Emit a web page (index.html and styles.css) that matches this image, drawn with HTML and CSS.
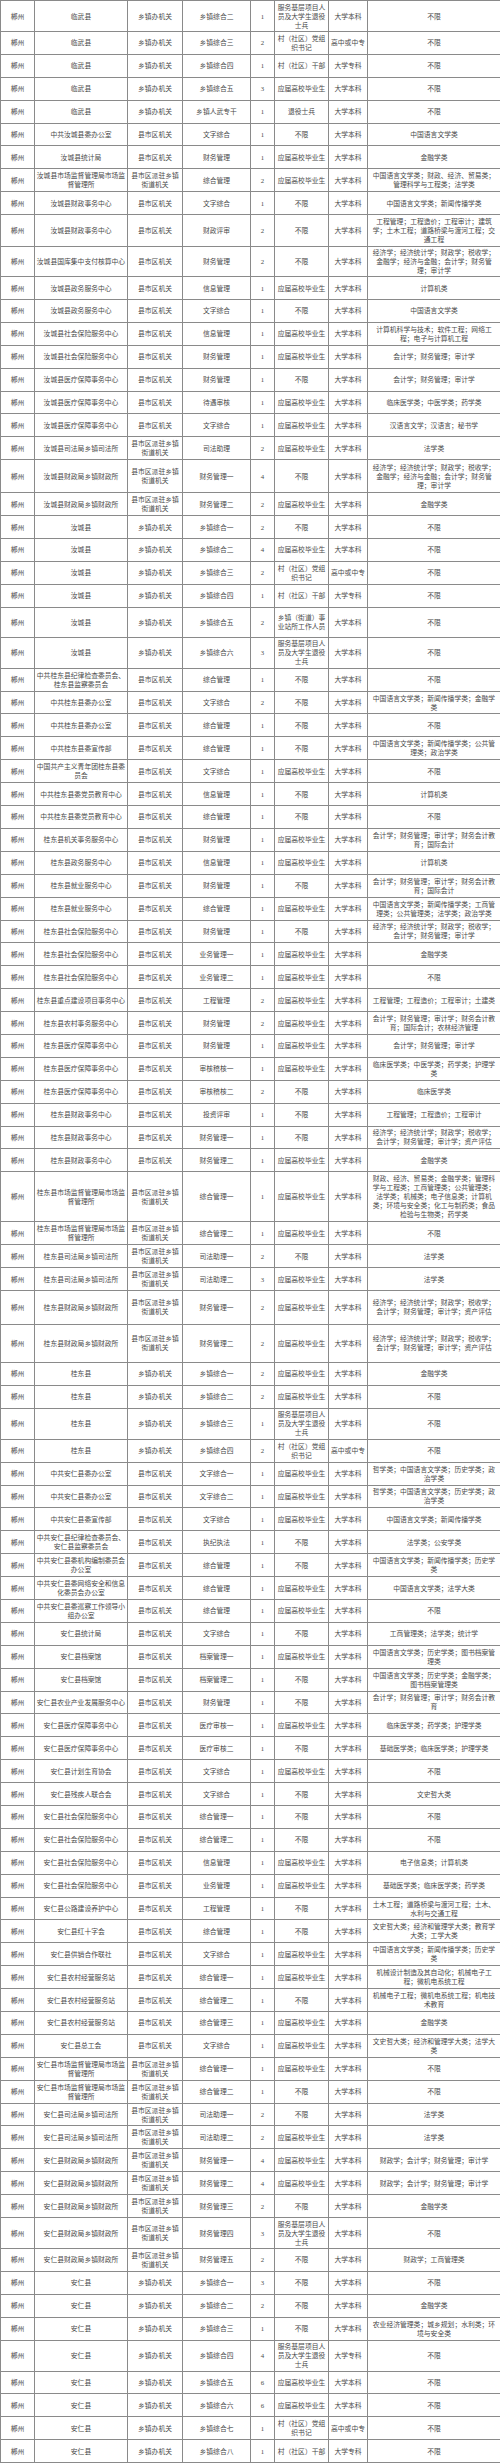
FILE: index.html
```html
<!DOCTYPE html>
<html lang="zh-CN">
<head>
<meta charset="utf-8">
<title>郴州 职位表</title>
<link rel="stylesheet" href="styles.css">
</head>
<body>
<table class="grid">
<colgroup>
<col class="c-city"><col class="c-unit"><col class="c-type"><col class="c-pos"><col class="c-num"><col class="c-obj"><col class="c-edu"><col class="c-major">
</colgroup>
<tbody>
<tr class="h31"><td>郴州</td><td>临武县</td><td>乡镇办机关</td><td>乡镇综合二</td><td>1</td><td>服务基层项目人<br>员及大学生退役<br>士兵</td><td>大学本科</td><td>不限</td></tr>
<tr><td>郴州</td><td>临武县</td><td>乡镇办机关</td><td>乡镇综合三</td><td>2</td><td>村（社区）党组<br>织书记</td><td>高中或中专</td><td>不限</td></tr>
<tr><td>郴州</td><td>临武县</td><td>乡镇办机关</td><td>乡镇综合四</td><td>1</td><td>村（社区）干部</td><td>大学专科</td><td>不限</td></tr>
<tr><td>郴州</td><td>临武县</td><td>乡镇办机关</td><td>乡镇综合五</td><td>3</td><td>应届高校毕业生</td><td>大学本科</td><td>不限</td></tr>
<tr><td>郴州</td><td>临武县</td><td>乡镇办机关</td><td>乡镇人武专干</td><td>1</td><td>退役士兵</td><td>大学本科</td><td>不限</td></tr>
<tr><td>郴州</td><td>中共汝城县委办公室</td><td>县市区机关</td><td>文字综合</td><td>1</td><td>不限</td><td>大学本科</td><td>中国语言文学类</td></tr>
<tr><td>郴州</td><td>汝城县统计局</td><td>县市区机关</td><td>财务管理</td><td>1</td><td>应届高校毕业生</td><td>大学本科</td><td>金融学类</td></tr>
<tr><td>郴州</td><td>汝城县市场监督管理局市场监<br>督管理所</td><td>县市区派驻乡镇<br>街道机关</td><td>综合管理</td><td>2</td><td>应届高校毕业生</td><td>大学本科</td><td>中国语言文学类；财政、经济、贸易类；<br>管理科学与工程类；法学类</td></tr>
<tr><td>郴州</td><td>汝城县财政事务中心</td><td>县市区机关</td><td>文字综合</td><td>1</td><td>不限</td><td>大学本科</td><td>中国语言文学类；新闻传播学类</td></tr>
<tr class="h32"><td>郴州</td><td>汝城县财政事务中心</td><td>县市区机关</td><td>财政评审</td><td>2</td><td>不限</td><td>大学本科</td><td>工程管理；工程造价；工程审计；建筑<br>学；土木工程；道路桥梁与渡河工程；交<br>通工程</td></tr>
<tr class="h30"><td>郴州</td><td>汝城县国库集中支付核算中心</td><td>县市区机关</td><td>财务管理</td><td>2</td><td>不限</td><td>大学本科</td><td>经济学；经济统计学；财政学；税收学；<br>金融学；经济与金融；会计学；财务管<br>理；审计学</td></tr>
<tr><td>郴州</td><td>汝城县政务服务中心</td><td>县市区机关</td><td>信息管理</td><td>1</td><td>应届高校毕业生</td><td>大学本科</td><td>计算机类</td></tr>
<tr><td>郴州</td><td>汝城县政务服务中心</td><td>县市区机关</td><td>文字综合</td><td>1</td><td>不限</td><td>大学本科</td><td>中国语言文学类</td></tr>
<tr><td>郴州</td><td>汝城县社会保险服务中心</td><td>县市区机关</td><td>信息管理</td><td>1</td><td>应届高校毕业生</td><td>大学本科</td><td>计算机科学与技术；软件工程；网络工<br>程；电子与计算机工程</td></tr>
<tr><td>郴州</td><td>汝城县社会保险服务中心</td><td>县市区机关</td><td>财务管理</td><td>1</td><td>应届高校毕业生</td><td>大学本科</td><td>会计学；财务管理；审计学</td></tr>
<tr><td>郴州</td><td>汝城县医疗保障事务中心</td><td>县市区机关</td><td>财务管理</td><td>1</td><td>不限</td><td>大学本科</td><td>会计学；财务管理；审计学</td></tr>
<tr><td>郴州</td><td>汝城县医疗保障事务中心</td><td>县市区机关</td><td>待遇审核</td><td>1</td><td>应届高校毕业生</td><td>大学本科</td><td>临床医学类；中医学类；药学类</td></tr>
<tr><td>郴州</td><td>汝城县医疗保障事务中心</td><td>县市区机关</td><td>文字综合</td><td>1</td><td>应届高校毕业生</td><td>大学本科</td><td>汉语言文学；汉语言；秘书学</td></tr>
<tr><td>郴州</td><td>汝城县司法局乡镇司法所</td><td>县市区派驻乡镇<br>街道机关</td><td>司法助理</td><td>2</td><td>应届高校毕业生</td><td>大学本科</td><td>法学类</td></tr>
<tr class="h33"><td>郴州</td><td>汝城县财政局乡镇财政所</td><td>县市区派驻乡镇<br>街道机关</td><td>财务管理一</td><td>4</td><td>不限</td><td>大学本科</td><td>经济学；经济统计学；财政学；税收学；<br>金融学；经济与金融；会计学；财务管<br>理；审计学</td></tr>
<tr><td>郴州</td><td>汝城县财政局乡镇财政所</td><td>县市区派驻乡镇<br>街道机关</td><td>财务管理二</td><td>2</td><td>应届高校毕业生</td><td>大学本科</td><td>金融学类</td></tr>
<tr><td>郴州</td><td>汝城县</td><td>乡镇办机关</td><td>乡镇综合一</td><td>2</td><td>不限</td><td>大学本科</td><td>不限</td></tr>
<tr><td>郴州</td><td>汝城县</td><td>乡镇办机关</td><td>乡镇综合二</td><td>4</td><td>应届高校毕业生</td><td>大学本科</td><td>不限</td></tr>
<tr><td>郴州</td><td>汝城县</td><td>乡镇办机关</td><td>乡镇综合三</td><td>2</td><td>村（社区）党组<br>织书记</td><td>高中或中专</td><td>不限</td></tr>
<tr><td>郴州</td><td>汝城县</td><td>乡镇办机关</td><td>乡镇综合四</td><td>1</td><td>村（社区）干部</td><td>大学专科</td><td>不限</td></tr>
<tr class="h30"><td>郴州</td><td>汝城县</td><td>乡镇办机关</td><td>乡镇综合五</td><td>2</td><td>乡镇（街道）事<br>业站所工作人员</td><td>大学本科</td><td>不限</td></tr>
<tr class="h31"><td>郴州</td><td>汝城县</td><td>乡镇办机关</td><td>乡镇综合六</td><td>3</td><td>服务基层项目人<br>员及大学生退役<br>士兵</td><td>大学本科</td><td>不限</td></tr>
<tr><td>郴州</td><td>中共桂东县纪律检查委员会、<br>桂东县监察委员会</td><td>县市区机关</td><td>综合管理</td><td>1</td><td>不限</td><td>大学本科</td><td>不限</td></tr>
<tr><td>郴州</td><td>中共桂东县委办公室</td><td>县市区机关</td><td>文字综合</td><td>2</td><td>不限</td><td>大学本科</td><td>中国语言文学类；新闻传播学类；金融学<br>类</td></tr>
<tr><td>郴州</td><td>中共桂东县委办公室</td><td>县市区机关</td><td>综合管理</td><td>1</td><td>不限</td><td>大学本科</td><td>不限</td></tr>
<tr><td>郴州</td><td>中共桂东县委宣传部</td><td>县市区机关</td><td>综合管理</td><td>1</td><td>不限</td><td>大学本科</td><td>中国语言文学类；新闻传播学类；公共管<br>理类；政治学类</td></tr>
<tr><td>郴州</td><td>中国共产主义青年团桂东县委<br>员会</td><td>县市区机关</td><td>文字综合</td><td>1</td><td>应届高校毕业生</td><td>大学本科</td><td>不限</td></tr>
<tr><td>郴州</td><td>中共桂东县委党员教育中心</td><td>县市区机关</td><td>信息管理</td><td>1</td><td>不限</td><td>大学本科</td><td>计算机类</td></tr>
<tr><td>郴州</td><td>中共桂东县委党员教育中心</td><td>县市区机关</td><td>综合管理</td><td>1</td><td>不限</td><td>大学本科</td><td>不限</td></tr>
<tr><td>郴州</td><td>桂东县机关事务服务中心</td><td>县市区机关</td><td>财务管理</td><td>1</td><td>应届高校毕业生</td><td>大学本科</td><td>会计学；财务管理；审计学；财务会计教<br>育；国际会计</td></tr>
<tr><td>郴州</td><td>桂东县政务服务中心</td><td>县市区机关</td><td>信息管理</td><td>1</td><td>应届高校毕业生</td><td>大学本科</td><td>计算机类</td></tr>
<tr><td>郴州</td><td>桂东县就业服务中心</td><td>县市区机关</td><td>财务管理</td><td>1</td><td>不限</td><td>大学本科</td><td>会计学；财务管理；审计学；财务会计教<br>育；国际会计</td></tr>
<tr><td>郴州</td><td>桂东县就业服务中心</td><td>县市区机关</td><td>综合管理</td><td>1</td><td>应届高校毕业生</td><td>大学本科</td><td>中国语言文学类；新闻传播学类；工商管<br>理类；公共管理类；法学类；政治学类</td></tr>
<tr><td>郴州</td><td>桂东县社会保险服务中心</td><td>县市区机关</td><td>财务管理</td><td>1</td><td>不限</td><td>大学本科</td><td>经济学；经济统计学；财政学；税收学；<br>会计学；财务管理；审计学</td></tr>
<tr><td>郴州</td><td>桂东县社会保险服务中心</td><td>县市区机关</td><td>业务管理一</td><td>1</td><td>应届高校毕业生</td><td>大学本科</td><td>金融学类</td></tr>
<tr><td>郴州</td><td>桂东县社会保险服务中心</td><td>县市区机关</td><td>业务管理二</td><td>1</td><td>应届高校毕业生</td><td>大学本科</td><td>不限</td></tr>
<tr><td>郴州</td><td>桂东县重点建设项目事务中心</td><td>县市区机关</td><td>工程管理</td><td>2</td><td>应届高校毕业生</td><td>大学本科</td><td>工程管理；工程造价；工程审计；土建类</td></tr>
<tr><td>郴州</td><td>桂东县农村事务服务中心</td><td>县市区机关</td><td>财务管理</td><td>2</td><td>应届高校毕业生</td><td>大学本科</td><td>会计学；财务管理；审计学；财务会计教<br>育；国际会计；农林经济管理</td></tr>
<tr><td>郴州</td><td>桂东县医疗保障事务中心</td><td>县市区机关</td><td>财务管理</td><td>1</td><td>应届高校毕业生</td><td>大学本科</td><td>会计学；财务管理；审计学</td></tr>
<tr><td>郴州</td><td>桂东县医疗保障事务中心</td><td>县市区机关</td><td>审核稽核一</td><td>1</td><td>应届高校毕业生</td><td>大学本科</td><td>临床医学类；中医学类；药学类；护理学<br>类</td></tr>
<tr><td>郴州</td><td>桂东县医疗保障事务中心</td><td>县市区机关</td><td>审核稽核二</td><td>2</td><td>不限</td><td>大学本科</td><td>临床医学类</td></tr>
<tr><td>郴州</td><td>桂东县财政事务中心</td><td>县市区机关</td><td>投资评审</td><td>1</td><td>不限</td><td>大学本科</td><td>工程管理；工程造价；工程审计</td></tr>
<tr><td>郴州</td><td>桂东县财政事务中心</td><td>县市区机关</td><td>财务管理一</td><td>1</td><td>不限</td><td>大学本科</td><td>经济学；经济统计学；财政学；税收学；<br>会计学；财务管理；审计学；资产评估</td></tr>
<tr><td>郴州</td><td>桂东县财政事务中心</td><td>县市区机关</td><td>财务管理二</td><td>1</td><td>应届高校毕业生</td><td>大学本科</td><td>金融学类</td></tr>
<tr class="h50"><td>郴州</td><td>桂东县市场监督管理局市场监<br>督管理所</td><td>县市区派驻乡镇<br>街道机关</td><td>综合管理一</td><td>1</td><td>应届高校毕业生</td><td>大学本科</td><td>财政、经济、贸易类；金融学类；管理科<br>学与工程类；工商管理类；公共管理类；<br>法学类；机械类；电子信息类；计算机<br>类；环境与安全类；化工与制药类；食品<br>检验与生物类；药学类</td></tr>
<tr><td>郴州</td><td>桂东县市场监督管理局市场监<br>督管理所</td><td>县市区派驻乡镇<br>街道机关</td><td>综合管理二</td><td>1</td><td>应届高校毕业生</td><td>大学本科</td><td>不限</td></tr>
<tr><td>郴州</td><td>桂东县司法局乡镇司法所</td><td>县市区派驻乡镇<br>街道机关</td><td>司法助理一</td><td>2</td><td>不限</td><td>大学本科</td><td>法学类</td></tr>
<tr><td>郴州</td><td>桂东县司法局乡镇司法所</td><td>县市区派驻乡镇<br>街道机关</td><td>司法助理二</td><td>3</td><td>应届高校毕业生</td><td>大学本科</td><td>法学类</td></tr>
<tr class="h34"><td>郴州</td><td>桂东县财政局乡镇财政所</td><td>县市区派驻乡镇<br>街道机关</td><td>财务管理一</td><td>2</td><td>应届高校毕业生</td><td>大学本科</td><td>经济学；经济统计学；财政学；税收学；<br>会计学；财务管理；审计学；资产评估</td></tr>
<tr class="h38"><td>郴州</td><td>桂东县财政局乡镇财政所</td><td>县市区派驻乡镇<br>街道机关</td><td>财务管理二</td><td>2</td><td>应届高校毕业生</td><td>大学本科</td><td>经济学；经济统计学；财政学；税收学；<br>会计学；财务管理；审计学；资产评估</td></tr>
<tr><td>郴州</td><td>桂东县</td><td>乡镇办机关</td><td>乡镇综合一</td><td>2</td><td>应届高校毕业生</td><td>大学本科</td><td>金融学类</td></tr>
<tr><td>郴州</td><td>桂东县</td><td>乡镇办机关</td><td>乡镇综合二</td><td>2</td><td>应届高校毕业生</td><td>大学本科</td><td>不限</td></tr>
<tr class="h31"><td>郴州</td><td>桂东县</td><td>乡镇办机关</td><td>乡镇综合三</td><td>1</td><td>服务基层项目人<br>员及大学生退役<br>士兵</td><td>大学本科</td><td>不限</td></tr>
<tr><td>郴州</td><td>桂东县</td><td>乡镇办机关</td><td>乡镇综合四</td><td>2</td><td>村（社区）党组<br>织书记</td><td>高中或中专</td><td>不限</td></tr>
<tr><td>郴州</td><td>中共安仁县委办公室</td><td>县市区机关</td><td>文字综合一</td><td>1</td><td>应届高校毕业生</td><td>大学本科</td><td>哲学类；中国语言文学类；历史学类；政<br>治学类</td></tr>
<tr><td>郴州</td><td>中共安仁县委办公室</td><td>县市区机关</td><td>文字综合二</td><td>1</td><td>应届高校毕业生</td><td>大学本科</td><td>哲学类；中国语言文学类；历史学类；政<br>治学类</td></tr>
<tr><td>郴州</td><td>中共安仁县委宣传部</td><td>县市区机关</td><td>文字综合</td><td>1</td><td>应届高校毕业生</td><td>大学本科</td><td>中国语言文学类；新闻传播学类</td></tr>
<tr><td>郴州</td><td>中共安仁县纪律检查委员会、<br>安仁县监察委员会</td><td>县市区机关</td><td>执纪执法</td><td>1</td><td>不限</td><td>大学本科</td><td>法学类；公安学类</td></tr>
<tr><td>郴州</td><td>中共安仁县委机构编制委员会<br>办公室</td><td>县市区机关</td><td>综合管理</td><td>1</td><td>不限</td><td>大学本科</td><td>中国语言文学类；新闻传播学类；历史学<br>类</td></tr>
<tr><td>郴州</td><td>中共安仁县委网络安全和信息<br>化委员会办公室</td><td>县市区机关</td><td>综合管理</td><td>1</td><td>应届高校毕业生</td><td>大学本科</td><td>中国语言文学类；法学大类</td></tr>
<tr><td>郴州</td><td>中共安仁县委巡察工作领导小<br>组办公室</td><td>县市区机关</td><td>综合管理</td><td>1</td><td>应届高校毕业生</td><td>大学本科</td><td>不限</td></tr>
<tr><td>郴州</td><td>安仁县统计局</td><td>县市区机关</td><td>文字综合</td><td>1</td><td>不限</td><td>大学本科</td><td>工商管理类；法学类；统计学</td></tr>
<tr><td>郴州</td><td>安仁县档案馆</td><td>县市区机关</td><td>档案管理一</td><td>1</td><td>应届高校毕业生</td><td>大学本科</td><td>中国语言文学类；历史学类；图书档案管<br>理类</td></tr>
<tr><td>郴州</td><td>安仁县档案馆</td><td>县市区机关</td><td>档案管理二</td><td>1</td><td>不限</td><td>大学本科</td><td>中国语言文学类；历史学类；金融学类；<br>图书档案管理类</td></tr>
<tr><td>郴州</td><td>安仁县农业产业发展服务中心</td><td>县市区机关</td><td>财务管理</td><td>1</td><td>不限</td><td>大学本科</td><td>会计学；财务管理；审计学；财务会计教<br>育</td></tr>
<tr><td>郴州</td><td>安仁县医疗保障事务中心</td><td>县市区机关</td><td>医疗审核一</td><td>1</td><td>应届高校毕业生</td><td>大学本科</td><td>临床医学类；药学类；护理学类</td></tr>
<tr><td>郴州</td><td>安仁县医疗保障事务中心</td><td>县市区机关</td><td>医疗审核二</td><td>1</td><td>不限</td><td>大学本科</td><td>基础医学类；临床医学类；护理学类</td></tr>
<tr><td>郴州</td><td>安仁县计划生育协会</td><td>县市区机关</td><td>文字综合</td><td>1</td><td>应届高校毕业生</td><td>大学本科</td><td>不限</td></tr>
<tr><td>郴州</td><td>安仁县残疾人联合会</td><td>县市区机关</td><td>文字综合</td><td>1</td><td>不限</td><td>大学本科</td><td>文史哲大类</td></tr>
<tr><td>郴州</td><td>安仁县社会保险服务中心</td><td>县市区机关</td><td>综合管理一</td><td>1</td><td>不限</td><td>大学本科</td><td>不限</td></tr>
<tr><td>郴州</td><td>安仁县社会保险服务中心</td><td>县市区机关</td><td>综合管理二</td><td>1</td><td>不限</td><td>大学本科</td><td>不限</td></tr>
<tr><td>郴州</td><td>安仁县社会保险服务中心</td><td>县市区机关</td><td>信息管理</td><td>1</td><td>应届高校毕业生</td><td>大学本科</td><td>电子信息类；计算机类</td></tr>
<tr><td>郴州</td><td>安仁县社会保险服务中心</td><td>县市区机关</td><td>业务管理</td><td>1</td><td>应届高校毕业生</td><td>大学本科</td><td>基础医学类；临床医学类；药学类</td></tr>
<tr><td>郴州</td><td>安仁县公路建设养护中心</td><td>县市区机关</td><td>工程管理</td><td>1</td><td>不限</td><td>大学本科</td><td>土木工程；道路桥梁与渡河工程；土木、<br>水利与交通工程</td></tr>
<tr><td>郴州</td><td>安仁县红十字会</td><td>县市区机关</td><td>综合管理</td><td>1</td><td>不限</td><td>大学本科</td><td>文史哲大类；经济和管理学大类；教育学<br>大类；工学大类</td></tr>
<tr><td>郴州</td><td>安仁县供销合作联社</td><td>县市区机关</td><td>文字综合</td><td>1</td><td>应届高校毕业生</td><td>大学本科</td><td>中国语言文学类；新闻传播学类；历史学<br>类</td></tr>
<tr><td>郴州</td><td>安仁县农村经营服务站</td><td>县市区机关</td><td>综合管理一</td><td>1</td><td>应届高校毕业生</td><td>大学本科</td><td>机械设计制造及其自动化；机械电子工<br>程；微机电系统工程</td></tr>
<tr><td>郴州</td><td>安仁县农村经营服务站</td><td>县市区机关</td><td>综合管理二</td><td>1</td><td>不限</td><td>大学本科</td><td>机械电子工程；微机电系统工程；机电技<br>术教育</td></tr>
<tr><td>郴州</td><td>安仁县农村经营服务站</td><td>县市区机关</td><td>综合管理三</td><td>1</td><td>应届高校毕业生</td><td>大学本科</td><td>金融学类</td></tr>
<tr><td>郴州</td><td>安仁县总工会</td><td>县市区机关</td><td>文字综合</td><td>1</td><td>应届高校毕业生</td><td>大学本科</td><td>文史哲大类；经济和管理学大类；法学大<br>类</td></tr>
<tr><td>郴州</td><td>安仁县市场监督管理局市场监<br>督管理所</td><td>县市区派驻乡镇<br>街道机关</td><td>综合管理一</td><td>1</td><td>应届高校毕业生</td><td>大学本科</td><td>不限</td></tr>
<tr><td>郴州</td><td>安仁县市场监督管理局市场监<br>督管理所</td><td>县市区派驻乡镇<br>街道机关</td><td>综合管理二</td><td>1</td><td>不限</td><td>大学本科</td><td>不限</td></tr>
<tr><td>郴州</td><td>安仁县司法局乡镇司法所</td><td>县市区派驻乡镇<br>街道机关</td><td>司法助理一</td><td>2</td><td>不限</td><td>大学本科</td><td>法学类</td></tr>
<tr><td>郴州</td><td>安仁县司法局乡镇司法所</td><td>县市区派驻乡镇<br>街道机关</td><td>司法助理二</td><td>2</td><td>应届高校毕业生</td><td>大学本科</td><td>法学类</td></tr>
<tr><td>郴州</td><td>安仁县财政局乡镇财政所</td><td>县市区派驻乡镇<br>街道机关</td><td>财务管理一</td><td>4</td><td>应届高校毕业生</td><td>大学本科</td><td>财政学；会计学；财务管理；审计学</td></tr>
<tr><td>郴州</td><td>安仁县财政局乡镇财政所</td><td>县市区派驻乡镇<br>街道机关</td><td>财务管理二</td><td>4</td><td>应届高校毕业生</td><td>大学本科</td><td>财政学；会计学；财务管理；审计学</td></tr>
<tr><td>郴州</td><td>安仁县财政局乡镇财政所</td><td>县市区派驻乡镇<br>街道机关</td><td>财务管理三</td><td>2</td><td>不限</td><td>大学本科</td><td>金融学类</td></tr>
<tr class="h31"><td>郴州</td><td>安仁县财政局乡镇财政所</td><td>县市区派驻乡镇<br>街道机关</td><td>财务管理四</td><td>3</td><td>服务基层项目人<br>员及大学生退役<br>士兵</td><td>大学本科</td><td>不限</td></tr>
<tr><td>郴州</td><td>安仁县财政局乡镇财政所</td><td>县市区派驻乡镇<br>街道机关</td><td>财务管理五</td><td>2</td><td>不限</td><td>大学本科</td><td>财政学；工商管理类</td></tr>
<tr><td>郴州</td><td>安仁县</td><td>乡镇办机关</td><td>乡镇综合一</td><td>3</td><td>不限</td><td>大学本科</td><td>不限</td></tr>
<tr><td>郴州</td><td>安仁县</td><td>乡镇办机关</td><td>乡镇综合二</td><td>2</td><td>不限</td><td>大学本科</td><td>金融学类</td></tr>
<tr><td>郴州</td><td>安仁县</td><td>乡镇办机关</td><td>乡镇综合三</td><td>1</td><td>不限</td><td>大学本科</td><td>农业经济管理类；城乡规划；水利类；环<br>境与安全类</td></tr>
<tr class="h31"><td>郴州</td><td>安仁县</td><td>乡镇办机关</td><td>乡镇综合四</td><td>4</td><td>服务基层项目人<br>员及大学生退役<br>士兵</td><td>大学专科</td><td>不限</td></tr>
<tr><td>郴州</td><td>安仁县</td><td>乡镇办机关</td><td>乡镇综合五</td><td>6</td><td>应届高校毕业生</td><td>大学本科</td><td>不限</td></tr>
<tr><td>郴州</td><td>安仁县</td><td>乡镇办机关</td><td>乡镇综合六</td><td>6</td><td>应届高校毕业生</td><td>大学本科</td><td>不限</td></tr>
<tr><td>郴州</td><td>安仁县</td><td>乡镇办机关</td><td>乡镇综合七</td><td>1</td><td>村（社区）党组<br>织书记</td><td>高中或中专</td><td>不限</td></tr>
<tr><td>郴州</td><td>安仁县</td><td>乡镇办机关</td><td>乡镇综合八</td><td>1</td><td>村（社区）干部</td><td>大学专科</td><td>不限</td></tr>
</tbody>
</table>
</body>
</html>
```

FILE: styles.css
```css
html, body {
  margin: 0;
  padding: 0;
  background: #ffffff;
}

.grid {
  width: 500px;
  border-collapse: collapse;
  table-layout: fixed;
  font-family: "Liberation Serif", "Noto Sans CJK SC", serif;
  font-size: 6.8px;
  line-height: 9px;
  color: #4a4a4a;
}

.c-city { width: 34px; }
.c-unit { width: 93px; }
.c-type { width: 55px; }
.c-pos { width: 68px; }
.c-num { width: 24px; }
.c-obj { width: 54px; }
.c-edu { width: 39px; }
.c-major { width: 133px; }

.grid tr { height: 22.9px; }
.grid tr.h30 { height: 30px; }
.grid tr.h31 { height: 31px; }
.grid tr.h32 { height: 32px; }
.grid tr.h33 { height: 33px; }
.grid tr.h34 { height: 34px; }
.grid tr.h38 { height: 38px; }
.grid tr.h50 { height: 50px; }

.grid td {
  border: 1px solid #8a8a8a;
  padding: 0 1px;
  text-align: center;
  vertical-align: middle;
  white-space: nowrap;
  overflow: hidden;
}
```
